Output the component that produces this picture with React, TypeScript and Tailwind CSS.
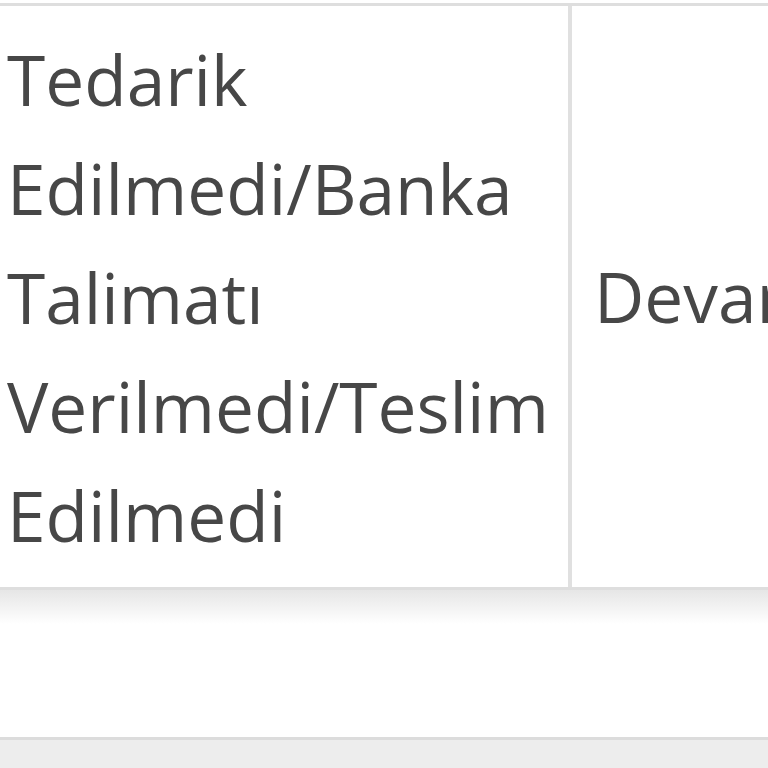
export default function App() {
  return (
    <div className="w-[768px] h-[768px] overflow-hidden bg-white flex flex-col font-['Open_Sans',_'Liberation_Sans',_sans-serif] text-[#474747]">
      <div className="pt-[3px]">
        <div className="flex w-[1400px] border-t-[3px] border-b-[3px] border-[#dedede]">
          <div className="w-[572px] shrink-0 border-r-[4px] border-[#e0e0e0] pl-[7px] pt-[19px] pb-[17px] text-[69.4px] leading-[109px]">
            Tedarik
            <br />
            Edilmedi/Banka
            <br />
            Talimatı
            <br />
            Verilmedi/Teslim
            <br />
            Edilmedi
          </div>
          <div className="flex-1 flex items-center pl-[22px] text-[69.4px] leading-[109px] whitespace-nowrap">
            Devam ediyor
          </div>
        </div>
      </div>
      <div className="h-[34px] bg-gradient-to-b from-[#e6e6e6] to-white" />
      <div className="flex-1" />
      <div className="h-[31px] border-t-[3px] border-[#dcdcdc] bg-[#ededed]" />
    </div>
  );
}
